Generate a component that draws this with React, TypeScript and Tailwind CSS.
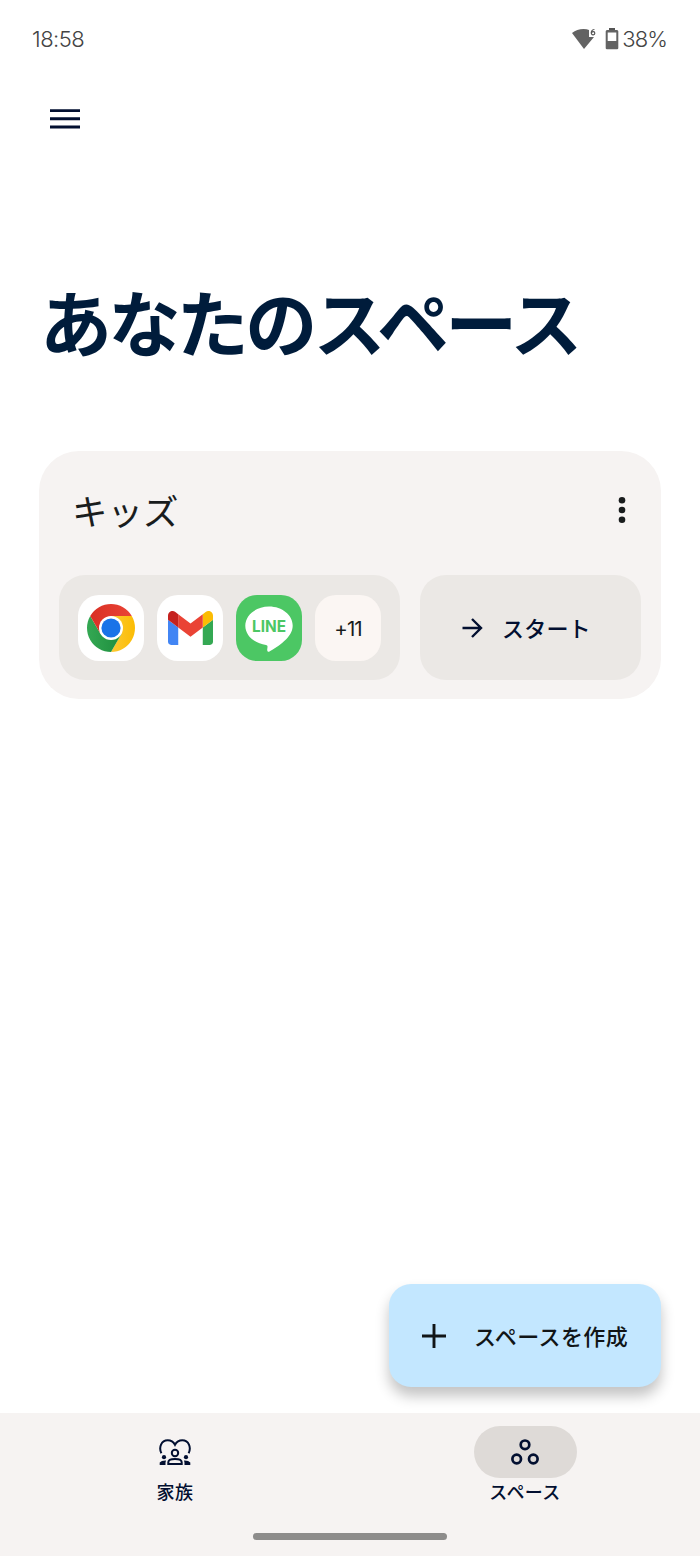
import type { ReactNode } from "react";

function StatusBar() {
  return (
    <div className="flex h-[78px] items-center justify-between pl-8 pr-[33px] font-['Inter','Noto_Sans_CJK_JP',sans-serif] text-[22px] font-light text-[#444444]">
      <span className="tracking-[-0.5px]">18:58</span>
      <div className="flex items-center">
        <svg width="24" height="22" viewBox="0 0 24 22" className="mr-[9px]">
          <path d="M0 5Q5 1 11.5 1Q15 1 17 2V9H22L12 21Z" fill="#636363" />
          <path d="M22.4 1.5C19.7 1.4 18.9 4 19.4 5.7C19.9 7.4 22.8 7.2 22.8 5.2C22.8 3.3 20 3.1 19.4 5" fill="none" stroke="#555555" strokeWidth="1.2" />
        </svg>
        <svg width="14" height="22" viewBox="0 0 14 22" className="mr-[3px]">
          <path d="M4 0H10V3H4Z" fill="#555555" />
          <path d="M2 2H12Q13.3 2 13.3 3.5V20Q13.3 21.3 12 21.3H2Q.7 21.3 .7 20V3.5Q.7 2 2 2Z" fill="#636363" />
          <path d="M2.7 4.5H11.3V13H2.7Z" fill="#fff" />
        </svg>
        <span className="tracking-[-0.9px]">38%</span>
      </div>
    </div>
  );
}

function ChromeLogo() {
  return (
    <svg width="48" height="48" viewBox="-24 -24 48 48">
      <defs>
        <linearGradient id="red" x1="0" x2="1">
          <stop offset="0" stopColor="#d93025" />
          <stop offset="1" stopColor="#ea4335" />
        </linearGradient>
        <linearGradient id="green" x1="0" x2="1">
          <stop offset="0" stopColor="#34a853" />
          <stop offset="1" stopColor="#1e8e3e" />
        </linearGradient>
        <linearGradient id="yellow" x1="0" x2="1">
          <stop offset="0" stopColor="#fcc934" />
          <stop offset="1" stopColor="#fbbc04" />
        </linearGradient>
      </defs>
      <path d="M0 24A24 24 0 0 0 20.78-12H0L10.39 6Z" fill="url(#yellow)" />
      <path d="M-20.78-12A24 24 0 0 0 0 24L10.39 6H-10.39Z" fill="url(#green)" />
      <path d="M20.78-12A24 24 0 0 0-20.78-12L-10.39 6L0-12Z" fill="url(#red)" />
      <circle r="12" fill="#fff" />
      <circle r="9.6" fill="#1a73e8" />
    </svg>
  );
}

function GmailLogo() {
  return (
    <svg width="45" height="34" viewBox="52 42 88 66">
      <path fill="#4285f4" d="M58 108h14V74L52 59v43c0 3.32 2.69 6 6 6" />
      <path fill="#34a853" d="M120 108h14c3.32 0 6-2.69 6-6V59l-20 15" />
      <path fill="#fbbc04" d="M120 48v26l20-15v-8c0-7.42-8.47-11.65-14.4-7.2" />
      <path fill="#ea4335" d="M72 74V48l24 18 24-18v26L96 92" />
      <path fill="#c5221f" d="M52 51v8l20 15V48l-5.6-4.2c-5.94-4.45-14.4-.22-14.4 7.2" />
    </svg>
  );
}

function LineLogo() {
  return (
    <svg width="66" height="66" viewBox="0 0 66 66">
      <path d="M33 11.5C19.7 11.5 9.3 20.2 9.3 30.8C9.3 40.4 18.1 48.4 30 50Q31.8 50.3 31.5 52L31.2 54.8Q31.1 57.8 33.5 56.4C42 51.8 56.7 42.2 56.7 30.8C56.7 20.2 46.3 11.5 33 11.5Z" fill="#fff" />
      <text x="16" y="37" textLength="34" lengthAdjust="spacingAndGlyphs" fill="#4cc764" className="font-['Inter',sans-serif] text-[16px] font-bold">
        LINE
      </text>
    </svg>
  );
}

function FamilyIcon() {
  return (
    <svg width="32" height="27" viewBox="0 0 32 27" fill="none" stroke="#020f30" strokeWidth="2">
      <path d="M2.4 14.2C-.5 8.5 2.2 1.3 8.7 1.3C12 1.3 14.5 3 16 5.8C17.5 3 20 1.3 23.3 1.3C29.8 1.3 32.5 8.5 29.6 14.2" />
      <circle cx="16" cy="14" r="3.2" />
      <path d="M9.3 25.1V23.3C9.3 20.8 13 19.9 16 19.9C19 19.9 22.7 20.8 22.7 23.3V25.1Z" />
      <g fill="#020f30" stroke="none">
        <circle cx="5" cy="18.2" r="2.1" />
        <circle cx="27" cy="18.2" r="2.1" />
        <path d="M.7 26V23.5Q2.5 21.3 7 21.5Q6.3 23 6.5 26Z" />
        <path d="M31.3 26V23.5Q29.5 21.3 25 21.5Q25.7 23 25.5 26Z" />
      </g>
    </svg>
  );
}

function SpacesIcon() {
  return (
    <svg width="28" height="26" viewBox="0 0 28 26" fill="none" stroke="#020f30" strokeWidth="2.7">
      <circle cx="14" cy="5.8" r="4.3" />
      <circle cx="5.7" cy="20" r="4.3" />
      <circle cx="22.3" cy="20" r="4.3" />
    </svg>
  );
}

function AppTile({ className, children }: { className: string; children: ReactNode }) {
  return <div className={`flex h-[66px] w-[66px] items-center justify-center rounded-[21px] ${className}`}>{children}</div>;
}

function SpaceCard() {
  return (
    <section className="mx-[39px] h-[248px] rounded-[40px] bg-[#f6f3f2] px-5 text-[#191c1d]">
      <div className="flex h-[124px] items-center justify-between pl-[13px] pr-[15px]">
        <h2 className="-mt-[7px] text-[35.5px] font-normal leading-[44px]">キッズ</h2>
        <svg width="8" height="28" viewBox="0 0 8 28" fill="#191c1d" className="-mt-[6px]">
          <circle cx="4" cy="4.2" r="3.3" />
          <circle cx="4" cy="14" r="3.3" />
          <circle cx="4" cy="23.8" r="3.3" />
        </svg>
      </div>
      <div className="flex gap-5">
        <div className="flex h-[105px] w-[341px] items-center gap-[13px] rounded-[26px] bg-[#ebe8e5] px-[19px]">
          <AppTile className="bg-white"><ChromeLogo /></AppTile>
          <AppTile className="bg-white"><GmailLogo /></AppTile>
          <AppTile className="bg-[#4cc764]"><LineLogo /></AppTile>
          <AppTile className="bg-[#fbf6f3]">
            <span className="mt-[3px] font-['Inter',sans-serif] text-[20.5px] tracking-[-0.9px]">+11</span>
          </AppTile>
        </div>
        <button className="flex h-[105px] w-[221px] items-center rounded-[26px] bg-[#ebe8e5] pl-[42px] text-[#020f30]">
          <svg width="21" height="20" viewBox="0 0 21 20" fill="none" stroke="#020f30" strokeWidth="2.4">
            <path d="M.5 10H19M10 1L19 10L10 19" />
          </svg>
          <span className="-mt-px ml-[19px] text-[22px] font-medium tracking-[0.2px]">スタート</span>
        </button>
      </div>
    </section>
  );
}

function BottomNav() {
  return (
    <nav className="flex h-[143px] flex-col items-center bg-[#f6f3f2] text-[18px] font-medium text-[#020f30]">
      <div className="grid h-[120px] w-full grid-cols-2 pt-[13px]">
        <div className="flex flex-col items-center">
          <div className="flex h-[52px] items-center"><FamilyIcon /></div>
          <span className="leading-[26px] tracking-[0.4px]">家族</span>
        </div>
        <div className="flex flex-col items-center">
          <div className="flex h-[52px] w-[103px] items-center justify-center rounded-full bg-[#dedad7]"><SpacesIcon /></div>
          <span className="leading-[26px] tracking-[0.4px]">スペース</span>
        </div>
      </div>
      <div className="h-[7px] w-[194px] rounded-full bg-[#8d8c8b]" />
    </nav>
  );
}

export default function App() {
  return (
    <div className="flex h-[1556px] w-[700px] flex-col bg-white font-['Noto_Sans_CJK_JP',sans-serif]">
      <StatusBar />
      <svg width="30" height="20" viewBox="0 0 30 20" className="ml-[50px] mt-[31px]" stroke="#020f30" strokeWidth="2.9">
        <path d="M0 1.6H30M0 9.8H30M0 18H30" />
      </svg>
      <h1 className="ml-[40px] mt-[139px] h-[104px] whitespace-nowrap text-[72px] font-bold leading-[104px] tracking-[-3.6px] text-[#001c3b]">
        あなたのスペース
      </h1>
      <div className="mt-[79px]"><SpaceCard /></div>
      <div className="flex-1" />
      <button className="mb-[26px] mr-[39px] flex h-[103px] w-[272px] items-center self-end rounded-[22px] bg-[#c3e7ff] pl-[33px] text-[#111517] shadow-[0_9px_14px_rgba(0,0,0,0.24)]">
        <svg width="24" height="24" viewBox="0 0 24 24" stroke="#111517" strokeWidth="2.9">
          <path d="M0 12H24M12 0V24" />
        </svg>
        <span className="-mt-px ml-[28px] text-[22px] font-medium tracking-[0.4px]">スペースを作成</span>
      </button>
      <BottomNav />
    </div>
  );
}
